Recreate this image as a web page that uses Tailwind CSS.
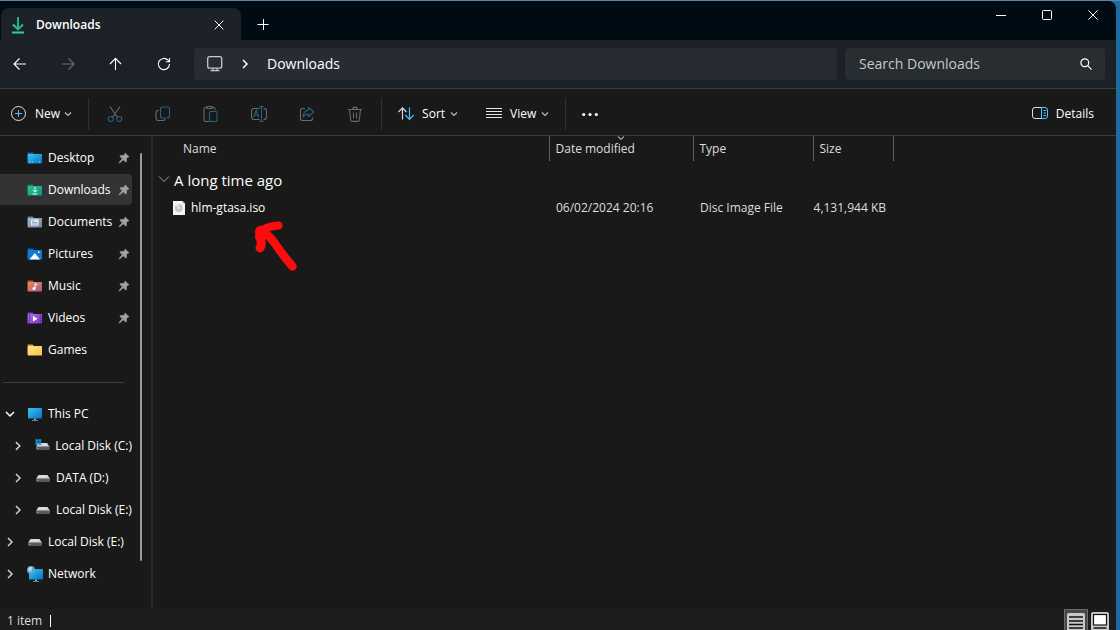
<!DOCTYPE html>
<html lang="en">
<head>
    <meta charset="UTF-8" />
    <meta name="viewport" content="width=device-width, initial-scale=1.0">
    <title>Downloads</title>
    <script src="https://cdn.jsdelivr.net/npm/@tailwindcss/browser@4"></script>
</head>
<body class="h-screen overflow-hidden bg-[#1d6ca0] font-['Open_Sans','Noto_Sans',sans-serif] text-xs text-white">

    <!-- Shared icons -->
    <svg class="absolute size-0" aria-hidden="true">
        <symbol id="pin" viewBox="0 0 12 12">
            <path d="M7.2 1 11 4.8 9.6 5.4 8.6 6.6 8.4 9.6 7.6 10 5.2 7.8 1.6 11 1 10.4 4.2 6.8 2 4.4 2.4 3.6 5.4 3.4 6.6 2.4Z" fill="#98a2a9" stroke="#98a2a9" stroke-width=".6" stroke-linejoin="round"/>
        </symbol>
        <symbol id="down" viewBox="0 0 8 8">
            <path d="M1 2.5 4 5.5 7 2.5" fill="none" stroke="currentColor" stroke-width="1.1"/>
        </symbol>
        <symbol id="right" viewBox="0 0 10 10">
            <path d="M3 1 7 5 3 9" fill="none" stroke="currentColor" stroke-width="1.5"/>
        </symbol>
        <symbol id="drive" viewBox="0 0 16 16">
            <path d="M3.5 5h9L15 9H1Z" fill="#d8dade"/>
            <rect x="1" y="8.5" width="14" height="3.5" rx=".6" fill="#57595d"/>
            <path d="M1 8.7h14" stroke="#85878b" stroke-width=".6"/>
            <rect x="2.6" y="9.8" width="1.4" height="1.2" fill="#3ad03a"/>
        </symbol>
        <linearGradient id="blue" x1="0" y1="0" x2="1" y2="1"><stop stop-color="#35c8ee"/><stop offset="1" stop-color="#0870c8"/></linearGradient>
        <linearGradient id="green" x1="0" y1="0" x2="1" y2="1"><stop stop-color="#2cc48d"/><stop offset="1" stop-color="#0d9488"/></linearGradient>
        <linearGradient id="grey" x1="0" y1="0" x2="1" y2="1"><stop stop-color="#a9b9cc"/><stop offset="1" stop-color="#6f87a3"/></linearGradient>
        <linearGradient id="orange" x1="0" y1="0" x2="1" y2="1"><stop stop-color="#f08a4b"/><stop offset="1" stop-color="#a75a9c"/></linearGradient>
        <linearGradient id="purple" x1="0" y1="0" x2="1" y2="1"><stop stop-color="#a974ee"/><stop offset="1" stop-color="#7a35c9"/></linearGradient>
        <linearGradient id="yellow" x1="0" y1="0" x2="1" y2="1"><stop stop-color="#ffe391"/><stop offset="1" stop-color="#fbc53a"/></linearGradient>
        <linearGradient id="arrow" x1="0" y1="0" x2="1" y2="1"><stop stop-color="#35d58d"/><stop offset="1" stop-color="#18a8a0"/></linearGradient>
    </svg>

    <div class="h-full border-t border-[#5f84a4] pr-1">
    <div class="flex h-full flex-col overflow-hidden rounded-tr-lg bg-[#191919]">

        <!-- Title bar -->
        <header class="flex h-[39px] shrink-0 items-end bg-[#000b14] pl-px">
            <div class="flex h-8 w-60 items-center rounded-t-lg bg-[#1c2228] pt-px pr-3.5 pl-2">
                <svg class="size-[18px] shrink-0" viewBox="0 0 18 18" fill="none" stroke-width="1.9">
                    <path d="M4 8.5 9 13.5 14 8.5" stroke="url(#arrow)"/>
                    <path d="M9 1v12" stroke="#22bd98"/>
                    <path d="M3 16.5h12" stroke="#2fd08f"/>
                </svg>
                <span class="ml-[9px] flex-1 font-semibold">Downloads</span>
                <button aria-label="Close tab" class="flex size-4 items-center justify-center">
                    <svg class="size-2.5" viewBox="0 0 10 10" stroke="#fff"><path d="M.7.7l8.6 8.6M9.3.7.7 9.3"/></svg>
                </button>
            </div>
            <button aria-label="New tab" class="flex h-8 w-11 items-center justify-center">
                <svg class="size-3" viewBox="0 0 12 12" stroke="#fff"><path d="M.5 6.5h11M6.5 1v11"/></svg>
            </button>
            <div class="ml-auto flex h-full items-start">
                <button aria-label="Minimize" class="flex h-7 w-[46px] items-center justify-center">
                    <svg class="size-2.5" viewBox="0 0 10 10" stroke="#fff"><path d="M0 5.5h10"/></svg>
                </button>
                <button aria-label="Maximize" class="flex h-7 w-[46px] items-center justify-center">
                    <svg class="size-2.5" viewBox="0 0 10 10" stroke="#fff" fill="none"><rect x=".5" y=".5" width="9" height="9" rx="1"/></svg>
                </button>
                <button aria-label="Close" class="flex h-7 w-[46px] items-center justify-center">
                    <svg class="size-2.5" viewBox="0 0 10 10" stroke="#fff"><path d="M.3.3l9.4 9.4M9.7.3.3 9.7"/></svg>
                </button>
            </div>
        </header>

        <!-- Navigation bar -->
        <nav class="flex h-[49px] shrink-0 items-center gap-2 border-b border-[#3b3b3b] bg-[#1b2127] pr-[11px]">
            <div class="flex gap-2">
                <button aria-label="Back" class="flex h-8 w-10 items-center justify-center">
                    <svg class="size-4" viewBox="0 0 16 16" fill="none" stroke="#fff" stroke-width="1.1"><path d="M14 8H2.5M7.5 2.5 2 8l5.5 5.5"/></svg>
                </button>
                <button aria-label="Forward" class="flex h-8 w-10 items-center justify-center">
                    <svg class="size-4" viewBox="0 0 16 16" fill="none" stroke="#6a6e72" stroke-width="1.1"><path d="M2 8h11.5M8.5 2.5 14 8l-5.5 5.5"/></svg>
                </button>
                <button aria-label="Up" class="flex h-8 w-10 items-center justify-center">
                    <svg class="size-4" viewBox="0 0 16 16" fill="none" stroke="#fff" stroke-width="1.1"><path d="M7.5 14V2.5M2 8 7.5 2.3 13 8"/></svg>
                </button>
                <button aria-label="Refresh" class="flex h-8 w-10 items-center justify-center">
                    <svg class="size-4" viewBox="0 0 16 16" fill="none" stroke="#fff" stroke-width="1.1"><path d="M13.5 8A5.6 5.6 0 1 1 12 4.2L13.3 5.5M13.5 2v3.7H9.8"/></svg>
                </button>
            </div>
            <div class="ml-0.5 flex h-8 flex-1 items-center rounded bg-[#272c33] pl-3">
                <svg class="size-[18px]" viewBox="0 0 18 18" fill="none" stroke="#c8cacc" stroke-width="1.3">
                    <rect x="1.7" y="1.7" width="14" height="11.5" rx="2"/>
                    <path d="M7 13.5v2M11 13.5v2M4.5 15.7h9"/>
                </svg>
                <svg class="ml-4 size-2.5 text-white"><use href="#right"/></svg>
                <a href="#" class="ml-[17px] text-sm">Downloads</a>
            </div>
            <label class="flex h-8 w-[260px] items-center rounded bg-[#272d31] pr-3 pl-3.5">
                <input type="text" aria-label="Search Downloads" placeholder="Search Downloads" class="min-w-0 flex-1 bg-transparent text-sm outline-none placeholder:text-[#c6c9ca]">
                <svg class="size-3.5" viewBox="0 0 14 14" fill="none" stroke="#fff" stroke-width="1.2"><circle cx="5.8" cy="5.8" r="3.9"/><path d="M8.7 8.7 12.6 12.6"/></svg>
            </label>
        </nav>

        <!-- Command bar -->
        <div class="flex h-[47px] shrink-0 items-center border-b border-[#3b3b3b] pt-[3px] pr-[22px] pl-[11px] font-medium">
            <button class="flex items-center">
                <svg class="size-4" viewBox="0 0 16 16" fill="none"><circle cx="7.5" cy="7.5" r="7" stroke="#e0e0e0"/><path d="M4 7.5h7M7.5 4v7" stroke="#4cc2ff"/></svg>
                <span class="ml-2">New</span>
                <svg class="ml-1 size-2 text-[#c0c0c0]"><use href="#down"/></svg>
            </button>
            <span class="ml-4 h-8 w-px bg-[#303030]"></span>
            <div class="ml-[18px] flex gap-8">
                <button aria-label="Cut">
                    <svg class="size-4" viewBox="0 0 16 16" fill="none" stroke-width="1.1"><path d="M3 .5 10.4 11.3M13 .5 5.6 11.3" stroke="#6a6a6a"/><circle cx="3.8" cy="13" r="2.5" stroke="#29617e"/><circle cx="12.2" cy="13" r="2.5" stroke="#29617e"/></svg>
                </button>
                <button aria-label="Copy">
                    <svg class="size-4" viewBox="0 0 16 16" fill="none" stroke-width="1.1"><rect x="5.5" y="1" width="9" height="11" rx="2" stroke="#29617e"/><path d="M4 4.5H3A2 2 0 0 0 1 6.500V12A2.500 2.500 0 0 0 3.500 14.500H8a2 2 0 0 0 2-1.500" stroke="#6a6a6a"/></svg>
                </button>
                <button aria-label="Paste">
                    <svg class="size-4" viewBox="0 0 16 16" fill="none" stroke-width="1.1"><path d="M6 15.5H2.5A1.500 1.500 0 0 1 1 14V3A1.500 1.500 0 0 1 2.500 1.500H4M9 1.500h1.500A1.500 1.500 0 0 1 12 3V4M4 .5h5v2H4Z" stroke="#6a6a6a"/><rect x="6.500" y="5.500" width="7.500" height="10" rx="1.300" stroke="#29617e"/></svg>
                </button>
                <button aria-label="Rename">
                    <svg class="size-4" viewBox="0 0 16 16" fill="none" stroke-width="1.1"><path d="M8.5 2.5H3A2.5 2.5 0 0 0 .5 5v6A2.5 2.5 0 0 0 3 13.5h5.5M12.500 2.500A2.500 2.500 0 0 1 15.500 5v6a2.500 2.500 0 0 1-3 2.500" stroke="#6a6a6a"/><path d="M10.500 .5v15M8.500.6h4M8.500 15.400h4M2.500 11.300 5.200 4.500l2.700 6.800M3.400 9H7" stroke="#29617e"/></svg>
                </button>
                <button aria-label="Share">
                    <svg class="size-4" viewBox="0 0 16 16" fill="none" stroke-width="1.1"><path d="M6 2.5H3.5A2 2 0 0 0 1.500 4.500V12.500A2 2 0 0 0 3.500 14.500H11.500A2 2 0 0 0 13.500 12.500V11.500" stroke="#6a6a6a"/><path d="M9.500 1.500 14.800 6 9.500 10.500V8C7 8 5.500 8.800 4 11 4.300 7 6 4.500 9.500 4Z" stroke="#29617e" stroke-linejoin="round"/></svg>
                </button>
                <button aria-label="Delete">
                    <svg class="size-4" viewBox="0 0 16 16" fill="none" stroke="#6a6a6a" stroke-width="1.1"><path d="M1 3.500h14M5.800 3.300a2.200 2.200 0 0 1 4.400 0M2.500 3.500 3.700 14A1.500 1.500 0 0 0 5.200 15.400h5.600A1.500 1.500 0 0 0 12.300 14L13.500 3.500M6.500 6.500v6M9.500 6.500v6"/></svg>
                </button>
            </div>
            <span class="ml-[18px] h-8 w-px bg-[#303030]"></span>
            <button class="ml-4 flex items-center">
                <svg class="size-4" viewBox="0 0 16 16" fill="none" stroke-width="1.2"><path d="M4.500 13.500V2M.5 6 4.500 1.800l4 4.200" stroke="#d8d8d8"/><path d="M11.500 1.500V13M7.300 9l4.200 4.300L15.700 9" stroke="#4cc2ff"/></svg>
                <span class="ml-2">Sort</span>
                <svg class="ml-[5px] size-2 text-[#c0c0c0]"><use href="#down"/></svg>
            </button>
            <button class="ml-7 flex items-center">
                <svg class="size-4" viewBox="0 0 16 16" stroke="#e8e8e8"><path d="M0 2.500h16M0 5.500h16M0 8.500h16M0 11.500h16"/></svg>
                <span class="ml-2">View</span>
                <svg class="ml-[5px] size-2 text-[#c0c0c0]"><use href="#down"/></svg>
            </button>
            <span class="ml-4 h-8 w-px bg-[#303030]"></span>
            <button aria-label="See more" class="ml-4">
                <svg class="size-4" viewBox="0 0 16 16" fill="#fff"><circle cx="1.700" cy="8.500" r="1.600"/><circle cx="8" cy="8.500" r="1.600"/><circle cx="14.300" cy="8.500" r="1.600"/></svg>
            </button>
            <button class="ml-auto flex items-center">
                <svg class="size-4" viewBox="0 0 16 16" fill="none"><path d="M9.500 1.500H3A2.500 2.500 0 0 0 .5 4v6A2.500 2.500 0 0 0 3 12.500h6.500" stroke="#e0e0e0"/><path d="M9.500 1.500h3.500A2.500 2.500 0 0 1 15.500 4v6a2.500 2.500 0 0 1-2.500 2.500H9.500ZM11.500 4.500h2.500M11.500 7h2.500M11.500 9.500h2.500" stroke="#4cc2ff"/></svg>
                <span class="ml-2">Details</span>
            </button>
        </div>

        <div class="flex min-h-0 flex-1">

            <!-- Sidebar -->
            <aside class="flex w-[153px] shrink-0 border-r-2 border-[#2b2b2b]">
                <div class="w-33 pt-1.5 whitespace-nowrap">
                    <a href="#" class="flex h-8 items-center pr-0.5 pl-[27px]">
                        <svg class="size-4" viewBox="0 0 16 16"><path d="M.7 2.5h5L7 4H15v9H.7Z" fill="#0b63b5"/><rect x=".7" y="4" width="14.3" height="9.5" rx=".7" fill="url(#blue)"/><path d="M2.5 12h1M5 12h1M11.5 12h1.5" stroke="#9adfff"/></svg>
                        <span class="ml-[5px] flex-1">Desktop</span>
                        <svg class="size-3"><use href="#pin"/></svg>
                    </a>
                    <a href="#" class="flex h-8 items-center rounded-r border-b border-[#191919] bg-[#333] pr-0.5 pl-[27px]">
                        <svg class="size-4" viewBox="0 0 16 16"><path d="M.7 2.5h5L7 4H15v9H.7Z" fill="#0b8461"/><rect x=".7" y="4" width="14.3" height="9.5" rx=".7" fill="url(#green)"/><path d="M8 5v5M5.800 8 8 10.200 10.200 8M5.500 12h5" stroke="#e9fff8" fill="none"/></svg>
                        <span class="ml-[5px] flex-1">Downloads</span>
                        <svg class="size-3"><use href="#pin"/></svg>
                    </a>
                    <a href="#" class="flex h-8 items-center pr-0.5 pl-[27px]">
                        <svg class="size-4" viewBox="0 0 16 16"><path d="M.7 2.5h5L7 4H15v9H.7Z" fill="#6d8097"/><rect x=".7" y="4" width="14.3" height="9.5" rx=".7" fill="url(#grey)"/><rect x="4" y="5.5" width="7.5" height="6" fill="#e7edf3"/><path d="M5 7h2.500M5 8.500h5.500M5 10h5.500" stroke="#7f96b0" stroke-width=".8"/></svg>
                        <span class="ml-[5px] flex-1">Documents</span>
                        <svg class="size-3"><use href="#pin"/></svg>
                    </a>
                    <a href="#" class="flex h-8 items-center pr-0.5 pl-[27px]">
                        <svg class="size-4" viewBox="0 0 16 16"><path d="M.7 2.5h5L7 4H15v9H.7Z" fill="#0b63b5"/><rect x=".7" y="4" width="14.3" height="9.5" rx=".7" fill="#127cd2"/><path d="M2.5 13.5 7.700 7l5.500 6.500Z" fill="#f4faff"/><rect x="11" y="5.500" width="1.500" height="1.500" fill="#fff"/></svg>
                        <span class="ml-[5px] flex-1">Pictures</span>
                        <svg class="size-3"><use href="#pin"/></svg>
                    </a>
                    <a href="#" class="flex h-8 items-center pr-0.5 pl-[27px]">
                        <svg class="size-4" viewBox="0 0 16 16"><path d="M.7 2.5h5L7 4H15v9H.7Z" fill="#b85c1b"/><rect x=".7" y="4" width="14.3" height="9.5" rx=".7" fill="url(#orange)"/><circle cx="7" cy="10.5" r="1.5" fill="#fff"/><path d="M8.100 10.500V5.500l2.400 1.500" stroke="#fff" fill="none"/></svg>
                        <span class="ml-[5px] flex-1">Music</span>
                        <svg class="size-3"><use href="#pin"/></svg>
                    </a>
                    <a href="#" class="flex h-8 items-center pr-0.5 pl-[27px]">
                        <svg class="size-4" viewBox="0 0 16 16"><path d="M.7 2.5h5L7 4H15v9H.7Z" fill="#7442b5"/><rect x=".7" y="4" width="14.3" height="9.5" rx=".7" fill="url(#purple)"/><path d="M2.5 5v8M13.3 5v8" stroke="#4f2292" stroke-width="1.2" stroke-dasharray="1.4 1"/><path d="M6 6v5.500L10.500 8.700Z" fill="#fff"/></svg>
                        <span class="ml-[5px] flex-1">Videos</span>
                        <svg class="size-3"><use href="#pin"/></svg>
                    </a>
                    <a href="#" class="flex h-8 items-center pr-0.5 pl-[27px]">
                        <svg class="size-4" viewBox="0 0 16 16"><path d="M.7 2.5h5L7 4H15v9H.7Z" fill="#e8a317"/><rect x=".7" y="4" width="14.3" height="9.5" rx=".7" fill="url(#yellow)"/></svg>
                        <span class="ml-[5px] flex-1">Games</span>
                    </a>
                    <hr class="mt-4 mr-2 mb-[15px] ml-[3px] border-[#3d3d3d]">
                    <a href="#" class="flex h-8 items-center pl-[5px]">
                        <svg class="size-2.5 rotate-90 text-white"><use href="#right"/></svg>
                        <svg class="ml-3 size-4" viewBox="0 0 16 16"><rect x="1" y="2" width="14" height="10.5" rx=".6" fill="url(#blue)"/><path d="M7 12.5h2V14h2v.8H5V14h2Z" fill="#8ba3b3"/></svg>
                        <span class="ml-[5px]">This PC</span>
                    </a>
                    <a href="#" class="flex h-8 items-center pl-[13px]">
                        <svg class="size-2.5 text-[#d0d0d0]"><use href="#right"/></svg>
                        <svg class="ml-3 size-4" viewBox="0 0 16 16"><use href="#drive"/><path d="M.5 1h2.700v2.700H.5ZM3.700 1h2.700v2.700H3.700ZM.5 4.200h2.700v2.700H.5ZM3.700 4.200h2.700v2.700H3.700Z" fill="#1e96e8"/></svg>
                        <span class="ml-[5px]">Local Disk (C:)</span>
                    </a>
                    <a href="#" class="flex h-8 items-center pl-[13px]">
                        <svg class="size-2.5 text-[#d0d0d0]"><use href="#right"/></svg>
                        <svg class="ml-3 size-4"><use href="#drive"/></svg>
                        <span class="ml-[5px]">DATA (D:)</span>
                    </a>
                    <a href="#" class="flex h-8 items-center pl-[13px]">
                        <svg class="size-2.5 text-[#d0d0d0]"><use href="#right"/></svg>
                        <svg class="ml-3 size-4"><use href="#drive"/></svg>
                        <span class="ml-[5px]">Local Disk (E:)</span>
                    </a>
                    <a href="#" class="flex h-8 items-center pl-[5px]">
                        <svg class="size-2.5 text-[#d0d0d0]"><use href="#right"/></svg>
                        <svg class="ml-3 size-4"><use href="#drive"/></svg>
                        <span class="ml-[5px]">Local Disk (E:)</span>
                    </a>
                    <a href="#" class="flex h-8 items-center pl-[5px]">
                        <svg class="size-2.5 text-[#d0d0d0]"><use href="#right"/></svg>
                        <svg class="ml-3 size-4" viewBox="0 0 16 16"><rect x="2" y="3" width="14" height="10.5" rx=".6" fill="url(#blue)"/><path d="M8 13.5h2V15h2v.8H6V15h2Z" fill="#8ba3b3"/><circle cx="4" cy="4" r="4" fill="#5ba4cf"/><path d="M1 3C2 1 4 .5 5 1.5S4 3 4.5 4.5 2.5 6 2 5 1 4 1 3Z" fill="#b9dced"/></svg>
                        <span class="ml-[5px]">Network</span>
                    </a>
                </div>
                <div class="mt-[17px] mb-12 ml-2 w-0.5 rounded bg-[#9a9a9a]"></div>
            </aside>

            <!-- File list -->
            <main class="relative min-w-0 flex-1">
                <table class="w-full table-fixed text-left whitespace-nowrap text-[#dedede]">
                    <colgroup>
                        <col class="w-[396px]"><col class="w-36"><col class="w-30"><col class="w-20"><col>
                    </colgroup>
                    <thead>
                        <tr class="h-[25px]">
                            <th class="border-r border-[#636363] pl-[30px] font-normal">Name</th>
                            <th class="relative border-r border-[#636363] pl-1.5 font-normal">
                                Date modified
                                <svg class="absolute top-0 left-1/2 size-2 -translate-x-1 -translate-y-0.5 text-[#a0a0a0]"><use href="#down"/></svg>
                            </th>
                            <th class="border-r border-[#636363] pl-1.5 font-normal">Type</th>
                            <th class="border-r border-[#636363] pl-1.5 font-normal">Size</th>
                            <td></td>
                        </tr>
                    </thead>
                    <tbody>
                        <tr class="h-[37px]">
                            <th colspan="5" class="pl-[5px] font-normal">
                                <button class="flex items-center gap-1 text-[15px] text-white">
                                    <svg class="size-3 text-[#a0a0a0]" viewBox="0 0 12 12" fill="none" stroke="currentColor"><path d="M1 3.5 6 8.5 11 3.5"/></svg>
                                    A long time ago
                                </button>
                            </th>
                        </tr>
                        <tr class="h-5">
                            <td class="pl-[18px]">
                                <span class="flex items-center gap-1 text-white">
                                    <svg class="size-4" viewBox="0 0 16 16"><path d="M2 1h9.5L14 3.5V15H2Z" fill="#f5f5f5"/><path d="M11.5 1v2.5H14Z" fill="#bbb"/><circle cx="7.8" cy="8" r="4" fill="#c3c9cc"/><path d="M7.8 8 4.5 5.5A4 4 0 0 1 7.8 4Z" fill="#e6eaec"/><circle cx="7.8" cy="8" r="1" fill="#eee"/></svg>
                                    hlm-gtasa.iso
                                </span>
                            </td>
                            <td class="pl-[7px]">06/02/2024 20:16</td>
                            <td class="pl-[7px]">Disc Image File</td>
                            <td class="pr-[7px] text-right">4,131,944 KB</td>
                            <td></td>
                        </tr>
                    </tbody>
                </table>

                <!-- Hand-drawn pointer -->
                <svg class="absolute top-20 left-24 size-14" viewBox="0 0 56 56" fill="none" stroke="#fc0d0d" stroke-linecap="round" stroke-linejoin="round">
                    <path d="M11 19 Q8 13 14 14 Q20 10 29.5 9.500" stroke-width="8"/>
                    <path d="M11 32 Q14 27 10.500 21 Q11 17 14 14" stroke-width="9"/>
                    <path d="M14 16 Q21 20 27 29 Q33 38 43.500 50.500" stroke-width="8.500"/>
                </svg>
            </main>
        </div>

        <!-- Status bar -->
        <footer class="flex h-[21px] shrink-0 items-center bg-[#1c1c1c] pr-1 pl-[7px] text-[#dcdcdc]">
            <span class="pt-0.5">1 item</span>
            <span class="mt-0.5 ml-2 h-3 w-px bg-white"></span>
            <button aria-label="Details view" class="ml-auto flex h-full w-6 items-start justify-center border border-b-0 border-[#6a6a6a] bg-[#484848] pt-[3px]">
                <svg class="h-[18px] w-[18px] shrink-0" viewBox="0 0 18 18"><rect width="18" height="18" rx="1.5" fill="#c9c9c9"/><path d="M2 4h14M2 8h14M2 11.500h14M2 15h14" stroke="#111" stroke-width="1.5"/></svg>
            </button>
            <button aria-label="Large icons view" class="flex h-full w-6 items-start justify-center pt-[3px]">
                <svg class="h-[19px] w-[18px] shrink-0" viewBox="0 0 18 19"><rect width="18" height="19" rx="2" fill="#c9c9c9"/><rect x="2.5" y="2.5" width="13" height="10.5" fill="#fff" stroke="#111" stroke-width="1.2"/><path d="M2.5 16h13" stroke="#111" stroke-width="1.5"/></svg>
            </button>
        </footer>
    </div>
    </div>

</body>
</html>
